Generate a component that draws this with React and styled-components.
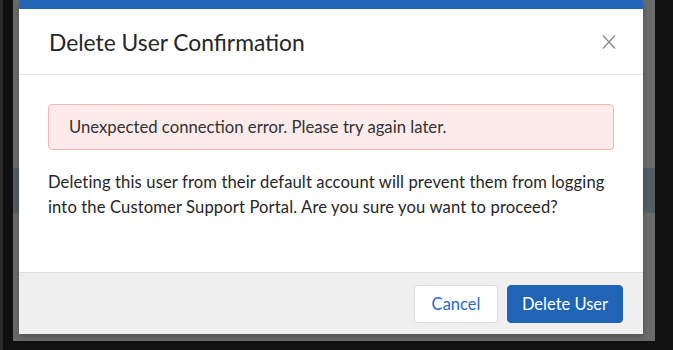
import React from "react";
import styled, { createGlobalStyle } from "styled-components";

const GlobalStyle = createGlobalStyle`
  html, body {
    margin: 0;
    padding: 0;
    background: #111111;
    font-family: Lato, "Open Sans", sans-serif;
  }
  * { box-sizing: border-box; }
`;

const Desk = styled.div`
  width: 673px;
  height: 350px;
  display: flex;
  background: #111111;
  border-left: 3px solid #2b2b2b;
  padding-left: 10px;
  overflow: hidden;
`;

const Screen = styled.div`
  width: 642px;
  height: 341px;
  padding: 0 12px 7px 6px;
  display: flex;
  background: linear-gradient(
    to bottom,
    #6b6b6b 0,
    #6b6b6b 168px,
    #545d66 168px,
    #545d66 213px,
    #6b6b6b 213px
  );
`;

const Modal = styled.div`
  flex: 1;
  display: flex;
  flex-direction: column;
  background: #ffffff;
  border-top: 9px solid #2366b8;
  box-shadow: 0 3px 6px rgba(0, 0, 0, 0.25);
`;

const Header = styled.div`
  height: 66px;
  display: flex;
  align-items: center;
  justify-content: space-between;
  padding: 0 26px 0 30px;
  border-bottom: 1px solid #e4e4e4;

  h2 {
    margin: 0;
    font-size: 22.8px;
    font-weight: 400;
    color: #262626;
  }
`;

const CloseButton = styled.button`
  border: 0;
  background: none;
  padding: 0;
  width: 16px;
  height: 16px;
  display: flex;
  cursor: pointer;
`;

const Body = styled.div`
  flex: 1;
  padding: 29px 29px 0 29px;
`;

const Alert = styled.div`
  height: 46px;
  display: flex;
  align-items: center;
  padding: 0 20px;
  background: #fdeaea;
  border: 1px solid #f4b4b0;
  border-radius: 4px;
  color: #333333;
  font-size: 16.7px;
`;

const Text = styled.p`
  margin: 20px 0 0;
  font-size: 16.6px;
  letter-spacing: 0.12px;
  line-height: 25px;
  white-space: nowrap;
  color: #262626;
`;

const Footer = styled.div`
  height: 62px;
  display: flex;
  align-items: center;
  justify-content: flex-end;
  gap: 9px;
  padding: 0 20px;
  background: #efefef;
  border-top: 1px solid #dddddd;
`;

const Button = styled.button`
  height: 38px;
  padding: 0;
  width: ${(p) => (p.$primary ? "116px" : "84px")};
  border-radius: 4px;
  font-family: Lato, "Open Sans", sans-serif;
  font-size: 16.5px;
  cursor: pointer;
  border: 1px solid ${(p) => (p.$primary ? "#2064b6" : "#dcdcdc")};
  background: ${(p) => (p.$primary ? "#2064b6" : "#ffffff")};
  color: ${(p) => (p.$primary ? "#ffffff" : "#2a6ac0")};
`;

const App = () => {
  return (
    <>
      <GlobalStyle />
      <Desk>
        <Screen>
          <Modal>
            <Header>
              <h2>Delete User Confirmation</h2>
              <CloseButton aria-label="Close">
                <svg width="16" height="16" viewBox="0 0 16 16">
                  <path
                    d="M2 1.5 L14 14.5 M14 1.5 L2 14.5"
                    stroke="#8a8a8a"
                    strokeWidth="1.3"
                    fill="none"
                  />
                </svg>
              </CloseButton>
            </Header>
            <Body>
              <Alert>Unexpected connection error. Please try again later.</Alert>
              <Text>
                Deleting this user from their default account will prevent them
                from logging
                <br />
                into the Customer Support Portal. Are you sure you want to
                proceed?
              </Text>
            </Body>
            <Footer>
              <Button>Cancel</Button>
              <Button $primary>Delete User</Button>
            </Footer>
          </Modal>
        </Screen>
      </Desk>
    </>
  );
};

export default App;
